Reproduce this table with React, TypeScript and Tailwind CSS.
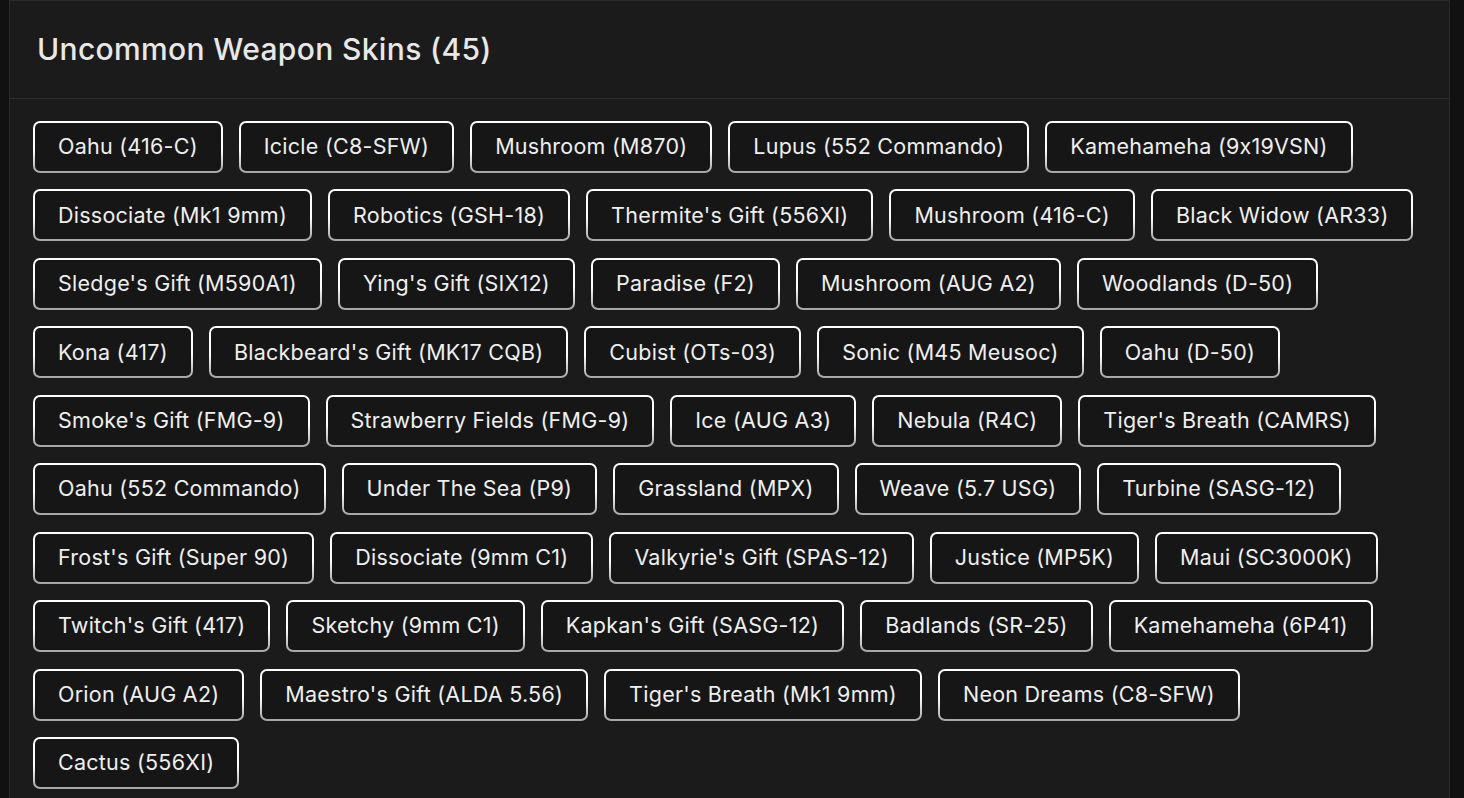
const skins = [
  "Oahu (416-C)",
  "Icicle (C8-SFW)",
  "Mushroom (M870)",
  "Lupus (552 Commando)",
  "Kamehameha (9x19VSN)",
  "Dissociate (Mk1 9mm)",
  "Robotics (GSH-18)",
  "Thermite's Gift (556XI)",
  "Mushroom (416-C)",
  "Black Widow (AR33)",
  "Sledge's Gift (M590A1)",
  "Ying's Gift (SIX12)",
  "Paradise (F2)",
  "Mushroom (AUG A2)",
  "Woodlands (D-50)",
  "Kona (417)",
  "Blackbeard's Gift (MK17 CQB)",
  "Cubist (OTs-03)",
  "Sonic (M45 Meusoc)",
  "Oahu (D-50)",
  "Smoke's Gift (FMG-9)",
  "Strawberry Fields (FMG-9)",
  "Ice (AUG A3)",
  "Nebula (R4C)",
  "Tiger's Breath (CAMRS)",
  "Oahu (552 Commando)",
  "Under The Sea (P9)",
  "Grassland (MPX)",
  "Weave (5.7 USG)",
  "Turbine (SASG-12)",
  "Frost's Gift (Super 90)",
  "Dissociate (9mm C1)",
  "Valkyrie's Gift (SPAS-12)",
  "Justice (MP5K)",
  "Maui (SC3000K)",
  "Twitch's Gift (417)",
  "Sketchy (9mm C1)",
  "Kapkan's Gift (SASG-12)",
  "Badlands (SR-25)",
  "Kamehameha (6P41)",
  "Orion (AUG A2)",
  "Maestro's Gift (ALDA 5.56)",
  "Tiger's Breath (Mk1 9mm)",
  "Neon Dreams (C8-SFW)",
  "Cactus (556XI)",
];

export default function App() {
  return (
    <div className="min-h-screen bg-[#111111] pl-[9px] pr-[14px] font-['Inter',_'Noto_Sans',_sans-serif] [font-feature-settings:'calt'_0]">
      <section className="border border-[#2a2a2a] bg-[#1b1b1b]">
        <header className="border-b border-[#2c2c2c] pl-[27px] pt-[30px] pb-[31px]">
          <h1 className="text-[30px] font-medium leading-[36px] tracking-[0.35px] text-[#e8e8e8]">
            Uncommon Weapon Skins ({skins.length})
          </h1>
        </header>
        <div className="flex flex-wrap gap-x-4 gap-y-[16.45px] pl-[23px] pr-[22px] pt-[22px] pb-[24px]">
          {skins.map((s, i) => (
            <button
              key={i}
              type="button"
              className="flex h-[52px] items-center rounded-[7px] border-[2.2px] border-transparent px-[23px] text-[21.5px] leading-none tracking-[0.25px] text-[#efefef] [background:linear-gradient(#161616,#161616)_padding-box,linear-gradient(to_bottom,#ffffff,#ffffff_55%,#a4a4a4)_border-box]"
            >
              {s}
            </button>
          ))}
        </div>
      </section>
    </div>
  );
}
